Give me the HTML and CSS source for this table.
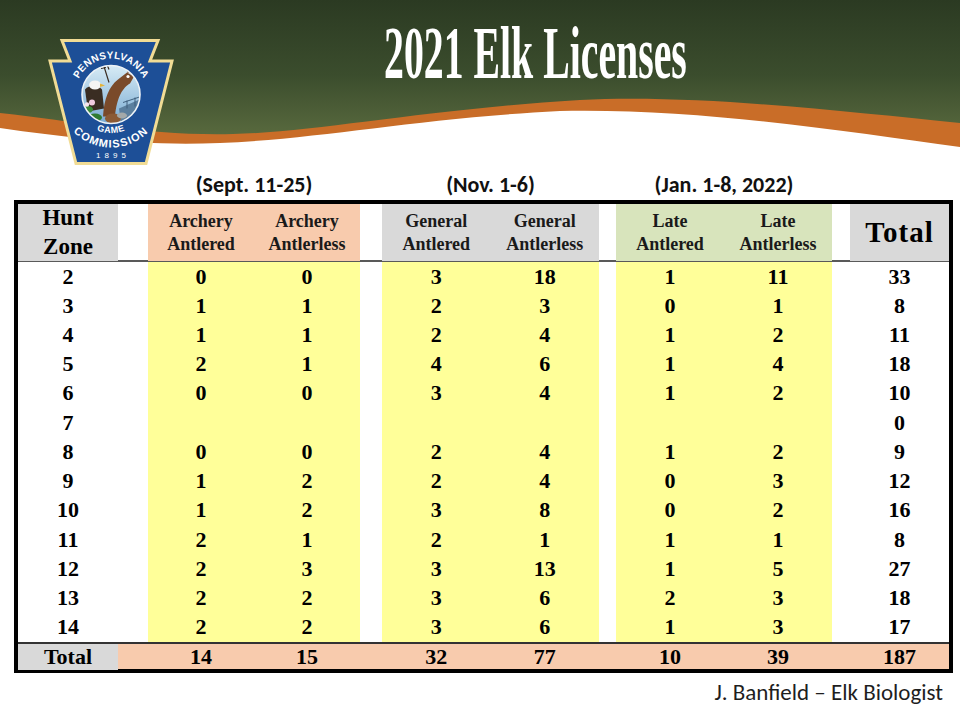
FILE: index.html
```html
<!DOCTYPE html>
<html>
<head>
<meta charset="utf-8">
<title>2021 Elk Licenses</title>
<link rel="stylesheet" href="styles.css">
</head>
<body>
<div class="slide">
  <header class="top">
    <svg class="bg" width="960" height="168" viewBox="0 0 960 168" preserveAspectRatio="none">
      <defs>
        <linearGradient id="grn" x1="0" y1="0" x2="0" y2="1">
          <stop offset="0" stop-color="#2b3a22"/>
          <stop offset="0.45" stop-color="#3b4d2d"/>
          <stop offset="0.85" stop-color="#5c6d40"/>
          <stop offset="1" stop-color="#5e6f42"/>
        </linearGradient>
      </defs>
      <rect x="0" y="0" width="960" height="168" fill="url(#grn)"/>
      <path d="M0,113 C80,122 150,136 233,134 C320,132 420,110 580,100 C700,94 850,112 960,123 L960,168 L0,168 Z" fill="#c96d28"/>
      <path d="M0,128 C70,138 140,146 220,143 C320,139 420,118 560,111 C700,108 850,132 960,147 L960,168 L0,168 Z" fill="#ffffff"/>
    </svg>
    <div class="top-content">
      <svg class="logo" width="126" height="127" viewBox="0 0 126 127">
        <defs>
          <linearGradient id="sky" x1="0" y1="0" x2="0" y2="1">
            <stop offset="0" stop-color="#d7ebf5"/>
            <stop offset="1" stop-color="#79abd3"/>
          </linearGradient>
          <clipPath id="seal">
            <circle cx="63" cy="55.5" r="29"/>
          </clipPath>
          <path id="arcTop" d="M27,55.5 A36,36 0 0 1 99,55.5"/>
          <path id="arcGame" d="M24.5,55.5 A38.5,38.5 0 0 0 101.5,55.5"/>
          <path id="arcBot" d="M10,55.5 A53,53 0 0 0 116,55.5"/>
        </defs>
        <polygon points="14,1.5 110,1.5 102,22 124,22 98,124.5 28,124.5 2,22 22,22" fill="#1d4f97" stroke="#f1dc95" stroke-width="3"/>
        <circle cx="63" cy="55.5" r="29" fill="url(#sky)"/>
        <g clip-path="url(#seal)">
          <g transform="translate(1,-2.5)">
            <path d="M70,72 L93,62 L92,78 L72,86 Z" fill="#5b7f9e"/>
            <path d="M74,66 L92,60 M78,64 L78,72 M86,61 L86,70" stroke="#3f5f7d" stroke-width="1"/>
            <path d="M55,30 L60,46 M52,32 L57,31 M58,28 L60,33" stroke="#3a2d22" stroke-width="1.2" fill="none"/>
            <path d="M54,80 C55,62 60,50 69,43 L78,36 L85,40 L81,47 C74,51 68,60 66,80 Z" fill="#7a4a2a"/>
            <path d="M78,36 L80,30 L82,37 Z" fill="#7a4a2a"/>
            <circle cx="79" cy="40" r="1.6" fill="#ffffff"/>
            <path d="M36,53 C40,48 49,48 53,53 L55,72 L39,75 Z" fill="#3a2d22"/>
            <ellipse cx="46" cy="48.5" rx="6" ry="4.5" fill="#f4f4f4"/>
            <path d="M51,47 L56,49 L51,50.5 Z" fill="#e5b43a"/>
            <ellipse cx="39" cy="73" rx="5" ry="3.5" fill="#3c8b3a"/>
            <ellipse cx="46" cy="81" rx="7" ry="4" fill="#2f7a33"/>
            <ellipse cx="36" cy="80" rx="4" ry="4" fill="#46963f"/>
            <circle cx="43" cy="66" r="3" fill="#f2cbe0"/>
            <circle cx="38" cy="68" r="2.2" fill="#f7e3ee"/>
            <ellipse cx="64" cy="82" rx="8" ry="5" fill="#8a5a35"/>
            <ellipse cx="73" cy="79" rx="5" ry="3" fill="#a3a9a9"/>
          </g>
        </g>
        <circle cx="63" cy="55.5" r="29" fill="none" stroke="#eef3f7" stroke-width="1.6"/>
        <text class="lg-top"><textPath href="#arcTop" startOffset="50%" text-anchor="middle">PENNSYLVANIA</textPath></text>
        <text class="lg-bot"><textPath class="lg-game" href="#arcGame" startOffset="50%" text-anchor="middle">GAME</textPath><textPath href="#arcBot" startOffset="50%" text-anchor="middle">COMMISSION</textPath></text>
        <text class="lg-year" x="65" y="119" text-anchor="middle">1895</text>
      </svg>
      <h1 class="title">2021 Elk Licenses</h1>
    </div>
  </header>

  <div class="labels cols">
    <span class="lab l-arch">(Sept. 11-25)</span>
    <span class="lab l-gen">(Nov. 1-6)</span>
    <span class="lab l-late">(Jan. 1-8, 2022)</span>
  </div>

  <div class="tbl">
    <div class="cols hdr">
      <div class="c zone gray">Hunt<br>Zone</div><div></div>
      <div class="c sub peach">Archery<br>Antlered</div><div class="c sub peach">Archery<br>Antlerless</div><div></div>
      <div class="c sub gray">General<br>Antlered</div><div class="c sub gray">General<br>Antlerless</div><div></div>
      <div class="c sub green">Late<br>Antlered</div><div class="c sub green">Late<br>Antlerless</div><div></div>
      <div class="c htot gray">Total</div>
    </div>

    <div class="cols row"><div class="c">2</div><div></div><div class="c y">0</div><div class="c y">0</div><div></div><div class="c y">3</div><div class="c y">18</div><div></div><div class="c y">1</div><div class="c y">11</div><div></div><div class="c">33</div></div>
    <div class="cols row"><div class="c">3</div><div></div><div class="c y">1</div><div class="c y">1</div><div></div><div class="c y">2</div><div class="c y">3</div><div></div><div class="c y">0</div><div class="c y">1</div><div></div><div class="c">8</div></div>
    <div class="cols row"><div class="c">4</div><div></div><div class="c y">1</div><div class="c y">1</div><div></div><div class="c y">2</div><div class="c y">4</div><div></div><div class="c y">1</div><div class="c y">2</div><div></div><div class="c">11</div></div>
    <div class="cols row"><div class="c">5</div><div></div><div class="c y">2</div><div class="c y">1</div><div></div><div class="c y">4</div><div class="c y">6</div><div></div><div class="c y">1</div><div class="c y">4</div><div></div><div class="c">18</div></div>
    <div class="cols row"><div class="c">6</div><div></div><div class="c y">0</div><div class="c y">0</div><div></div><div class="c y">3</div><div class="c y">4</div><div></div><div class="c y">1</div><div class="c y">2</div><div></div><div class="c">10</div></div>
    <div class="cols row"><div class="c">7</div><div></div><div class="c y"></div><div class="c y"></div><div></div><div class="c y"></div><div class="c y"></div><div></div><div class="c y"></div><div class="c y"></div><div></div><div class="c">0</div></div>
    <div class="cols row"><div class="c">8</div><div></div><div class="c y">0</div><div class="c y">0</div><div></div><div class="c y">2</div><div class="c y">4</div><div></div><div class="c y">1</div><div class="c y">2</div><div></div><div class="c">9</div></div>
    <div class="cols row"><div class="c">9</div><div></div><div class="c y">1</div><div class="c y">2</div><div></div><div class="c y">2</div><div class="c y">4</div><div></div><div class="c y">0</div><div class="c y">3</div><div></div><div class="c">12</div></div>
    <div class="cols row"><div class="c">10</div><div></div><div class="c y">1</div><div class="c y">2</div><div></div><div class="c y">3</div><div class="c y">8</div><div></div><div class="c y">0</div><div class="c y">2</div><div></div><div class="c">16</div></div>
    <div class="cols row"><div class="c">11</div><div></div><div class="c y">2</div><div class="c y">1</div><div></div><div class="c y">2</div><div class="c y">1</div><div></div><div class="c y">1</div><div class="c y">1</div><div></div><div class="c">8</div></div>
    <div class="cols row"><div class="c">12</div><div></div><div class="c y">2</div><div class="c y">3</div><div></div><div class="c y">3</div><div class="c y">13</div><div></div><div class="c y">1</div><div class="c y">5</div><div></div><div class="c">27</div></div>
    <div class="cols row"><div class="c">13</div><div></div><div class="c y">2</div><div class="c y">2</div><div></div><div class="c y">3</div><div class="c y">6</div><div></div><div class="c y">2</div><div class="c y">3</div><div></div><div class="c">18</div></div>
    <div class="cols row"><div class="c">14</div><div></div><div class="c y">2</div><div class="c y">2</div><div></div><div class="c y">3</div><div class="c y">6</div><div></div><div class="c y">1</div><div class="c y">3</div><div></div><div class="c">17</div></div>

    <div class="cols tot">
      <div class="c gray">Total</div><div></div>
      <div class="c">14</div><div class="c">15</div><div></div>
      <div class="c">32</div><div class="c">77</div><div></div>
      <div class="c">10</div><div class="c">39</div><div></div>
      <div class="c">187</div>
    </div>
  </div>

  <p class="credit">J. Banfield – Elk Biologist</p>
</div>
</body>
</html>
```

FILE: styles.css
```css
* { box-sizing: border-box; }

html, body {
  margin: 0;
  padding: 0;
  background: #ffffff;
}

.slide {
  width: 960px;
  height: 720px;
  overflow: hidden;
  background: #ffffff;
}

/* ---------- header band ---------- */
.top {
  display: grid;
  height: 168px;
}
.top > * {
  grid-area: 1 / 1;
}
.bg {
  display: block;
}
.top-content {
  display: flex;
  align-items: flex-start;
}
.logo {
  display: block;
  margin: 39px 0 0 48px;
  flex: none;
}
.lg-top {
  font-family: "Liberation Sans", Arial, sans-serif;
  font-weight: bold;
  font-size: 10px;
  letter-spacing: 0.3px;
  fill: #ffffff;
}
.lg-bot {
  font-family: "Liberation Sans", Arial, sans-serif;
  font-weight: bold;
  font-size: 11px;
  letter-spacing: 1.2px;
  fill: #ffffff;
}
.lg-game {
  font-size: 9px;
  letter-spacing: 0.5px;
}
.lg-year {
  font-family: "Liberation Sans", Arial, sans-serif;
  font-size: 8px;
  letter-spacing: 4px;
  fill: #ffffff;
}
.title {
  margin: 17px 0 0 210px;
  font-family: "Liberation Serif", "Times New Roman", serif;
  font-weight: bold;
  font-size: 73px;
  line-height: 73px;
  color: #ffffff;
  white-space: nowrap;
  transform: scaleX(0.545);
  transform-origin: 0 0;
}

/* ---------- shared column template ---------- */
.cols {
  display: grid;
  grid-template-columns: 100px 30px 106px 106px 22px 108.5px 108.5px 17px 108px 108px 18px 99px;
}

/* ---------- season labels ---------- */
.labels {
  height: 32px;
  margin-left: 18px;
  align-items: center;
  font-family: "Carlito", "Lato", "Liberation Sans", sans-serif;
  font-weight: bold;
  font-size: 22px;
  color: #111111;
}
.lab {
  text-align: center;
  grid-row: 1;
  white-space: nowrap;
}
.l-arch { grid-column: 3 / span 2; }
.l-gen { grid-column: 6 / span 2; }
.l-late { grid-column: 9 / span 2; }

/* ---------- table ---------- */
.tbl {
  margin-left: 14px;
  width: 939px;
  height: 473px;
  border: 4px solid #000000;
  font-family: "Liberation Serif", "Times New Roman", serif;
  font-weight: bold;
  color: #000000;
}
.c {
  display: flex;
  align-items: center;
  justify-content: center;
  text-align: center;
}
.hdr {
  height: 58px;
  border-bottom: 2px solid #595959;
}
.hdr .sub {
  font-size: 18px;
  line-height: 23px;
  color: #1a1a1a;
}
.hdr .zone {
  font-size: 23px;
  line-height: 28.5px;
}
.hdr .htot {
  font-size: 29px;
  letter-spacing: 1px;
}
.gray { background: #d9d9d9; }
.peach { background: #f8cbad; }
.green { background: #d8e4bc; }

.row {
  height: 29.23px;
  font-size: 22px;
}
.y { background: #ffff99; }

.tot {
  height: 27px;
  border-top: 2px solid #333333;
  background: #f8cbad;
  font-size: 22px;
}
.tot .gray { background: #d9d9d9; }

/* ---------- credit ---------- */
.credit {
  margin: 6px 17px 0 0;
  text-align: right;
  font-family: "Carlito", "Lato", "Liberation Sans", sans-serif;
  font-size: 23px;
  line-height: 26px;
  color: #1e1e1e;
}
```
